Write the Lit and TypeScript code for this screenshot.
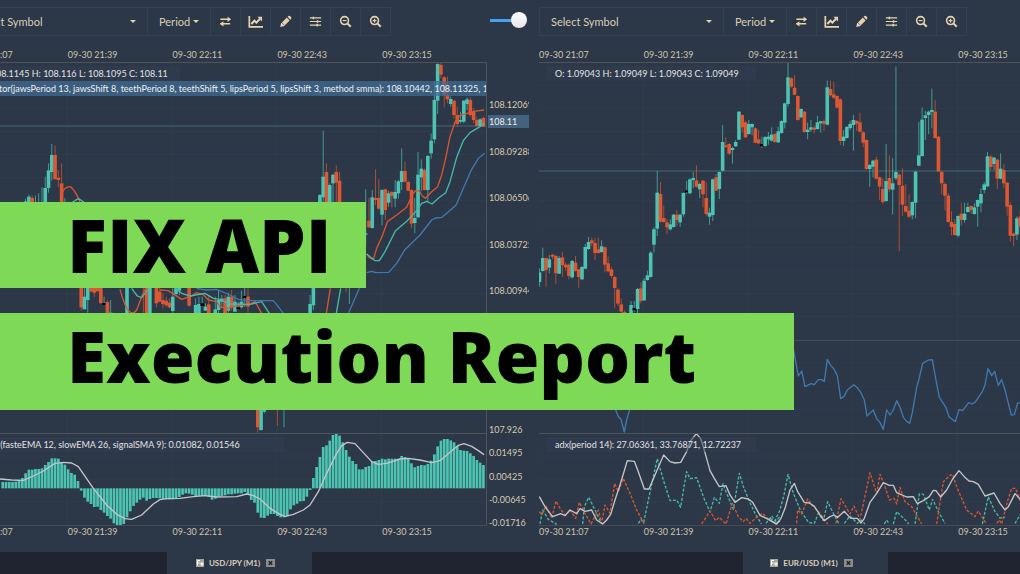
import { LitElement, html, svg, css } from "lit";
import { customElement, property } from "lit/decorators.js";

type Candle = [number, number, number, number, number, string];

// Chart data is kept in ticks: three ticks to a pixel, candle spacing 9.81 ticks.
const STEP = 3.27;

/** Parses "kind,high,top,bottom,low" quotes; consecutive quotes follow `start`, "@n" jumps. */
function quotes(start: number, shift: number, text: string): Candle[] {
  const out: Candle[] = [];
  let i = start;
  for (const part of text.trim().split(/\s+/)) {
    if (part[0] === "@") {
      i = Number(part.slice(1));
      continue;
    }
    const [kind, h, t, b, l] = part.split(",");
    out.push([i, +h + shift, +t + shift, +b + shift, +l + shift, kind]);
    i++;
  }
  return out;
}

const usdjpy: Candle[] = quotes(19, 174, `
u,236,244,260,260 u,224,230,260,260 d,226,234,260,260 u,227,246,260,260 u,220,248,260,260 u,202,246,260,260
u,170,204,260,260 u,130,151,204,218 u,72,105,156,182 d,76,105,177,180 d,150,173,180,202 d,130,190,260,260 u,234,250,260,260
@36 d,495,495,562,572 u,500,530,568,568 u,495,500,540,578 d,495,495,515,515 d,495,500,518,532 d,495,500,514,514 d,495,495,549,552 n,530,549,555,556
d,542,546,590,590 u,540,578,590,590
@50 u,480,495,590,590
@55 d,495,495,500,578 d,495,495,590,590 u,495,495,590,590
@59 d,495,500,550,562 d,495,515,545,545 d,520,540,552,565 d,530,542,556,560 d,535,548,562,565 u,505,530,573,578 u,495,505,522,528 u,495,500,512,525
@69 d,495,500,557,560
@71 u,535,555,590,590 u,530,552,590,590 n,530,550,558,560 u,550,560,572,572 d,525,553,590,590
@77 u,530,568,590,590 u,510,540,570,590 u,525,536,545,565 d,525,535,590,590 u,518,530,572,578 d,510,530,562,572 u,525,545,575,575 n,545,562,568,570
u,512,545,562,565 n,500,528,534,560 d,505,530,560,578
@90 d,860,860,922,938 u,860,860,930,932 u,860,865,875,880
@96 d,860,861,862,918
@98 u,860,861,862,922
@106 u,525,552,590,590 u,490,495,556,570 u,300,320,500,500 u,222,225,260,260 u,32,170,232,260 d,130,156,270,270 u,190,195,260,260 u,162,164,190,260
d,136,156,188,260 d,155,182,270,270
@117 d,495,496,497,515 u,495,496,497,552
@123 u,208,340,341,375 d,234,302,322,324 u,210,232,324,326 d,148,234,240,255 d,178,234,266,270 u,208,210,284,316 d,206,208,270,300
u,212,220,248,260 d,213,216,228,262 u,180,216,236,262 u,180,184,220,236 u,85,153,186,210 d,124,153,185,187 d,182,186,212,213
d,208,210,311,325 u,234,294,309,340 u,96,164,292,295 u,118,146,172,213 d,146,150,210,212 u,105,108,210,243 u,40,62,100,116
u,-115,-60,58,70 u,-170,-168,-58,-18 d,-172,-165,-136,-125 d,-132,-128,-75,-38 d,-130,-75,-62,-50 u,-70,-63,-48,-40 d,-60,-58,-15,-5
d,-40,-15,12,20 u,-25,0,5,10 u,-60,-58,5,10 u,-68,-62,-48,-30 d,-68,-60,-15,-10 d,-35,-27,0,10 d,-8,0,18,20 u,-5,-2,18,20 d,-10,-6,20,22`);

const eurusd: Candle[] = [
  ...quotes(0, 174, `
u,445,457,486,500 u,383,414,453,455 d,412,414,450,500 u,405,418,443,460 d,402,404,410,418 d,405,408,460,493 u,408,414,461,462
d,395,412,435,470 d,428,434,442,452 d,430,434,468,478 u,420,423,472,476 d,408,428,453,455 d,446,448,471,503 u,438,441,478,480
u,372,381,446,448 u,351,366,387,390 d,352,361,370,378 d,354,369,399,420 d,353,388,399,401 u,361,379,396,398 d,380,382,434,457
d,410,430,454,457 d,440,448,468,473 d,468,471,504,565 d,504,509,551,558 d,535,553,575,580 d,572,576,600,610 d,585,590,610,620
u,543,555,600,600 n,543,564,571,575 u,504,507,567,580 d,487,505,543,550 u,474,482,541,543 u,452,466,480,482 u,394,398,471,473
u,322,328,374,397 u,153,218,326,348 d,186,222,305,308 d,256,294,306,308 d,297,307,322,342 u,298,313,328,332 u,282,284,321,323
d,270,284,300,318 u,282,284,307,321 u,217,219,283,290 n,183,211,217,222 u,176,178,220,222 u,156,174,180,205 d,136,181,200,203
u,188,192,208,234 d,180,182,223,262 d,187,234,282,287 u,263,278,290,314 u,176,178,285,303 d,162,172,212,213 u,155,156,207,237
u,15,66,152,155 d,51,76,81,84 d,70,72,101,105 u,80,84,90,131 u,60,66,79,81 u,-27,-25,59,60 d,-17,-15,22,38 d,2,7,52,54
u,0,12,42,44 u,10,12,22,46 d,22,25,68,70 d,30,58,70,72 n,50,72,79,84 u,48,51,78,80 u,36,50,58,74 u,22,44,62,64 d,38,42,66,68 u,20,34,67,69`),
  ...quotes(74, -6, `
u,181,183,219,221 u,128,130,188,205 u,5,52,132,140 d,52,55,80,85 d,45,83,104,106 d,106,108,180,182 u,145,147,172,175 d,153,155,216,218
u,188,209,216,238 u,180,202,209,216 d,198,203,209,220 u,168,187,207,209 u,182,184,190,218 d,178,183,191,212 u,62,82,194,196 d,62,87,106,110
d,64,103,113,117 d,106,108,143,145 d,115,118,243,255 u,210,230,243,258 u,198,201,234,236 u,182,192,204,210 u,165,180,195,272 d,180,183,191,213
d,158,187,215,218 d,213,217,248,262 d,238,240,327,330 u,312,315,327,380 u,300,302,320,352 d,290,299,356,358 d,350,352,380,420 d,355,387,426,432
u,252,363,423,425 d,286,354,388,396 u,294,370,389,464 u,20,336,355,360 d,340,344,375,574 d,325,377,434,468 d,372,438,455,458 d,403,452,470,475
u,424,426,466,478 u,332,335,428,475 u,185,286,317,319 u,142,179,288,290 u,152,166,174,240 u,152,155,165,222 u,86,150,156,205 d,120,155,234,236
d,228,230,334,336 d,333,336,370,403 d,367,372,407,452 d,400,407,486,488 d,454,486,501,526 d,477,492,525,527 u,466,468,527,532 d,428,461,480,497
u,428,461,480,488 u,428,441,456,458 d,436,438,450,462 u,430,442,462,464 u,418,420,440,500 u,385,402,430,457 u,366,373,390,400 u,276,289,379,381
d,285,290,321,330 u,290,293,312,330 d,297,299,356,388 u,280,326,356,358 d,312,330,370,384 d,366,368,440,467 d,426,435,527,545 d,518,521,528,558
u,469,475,524,540 d,450,470,500,520`),
];

// Histogram levels; the zero level is 265.
const histogram = `246 246 246 246 245 240 234 220 209 209 207 207 205 195 186 175 175 176 187 194 208 219 224 243 272 293 305 312 321 320 330
338 348 356 370 375 375 372 352 334 318 308 299 293 302 297 294 294 295 297 298 298 298 295 291 284 280 281 284 288 288 288 287 291 299 296 290
288 286 283 283 281 280 280 276 282 300 308 338 353 354 347 342 342 348 352 352 349 328 316 311 304 303 290 270 234 201 171 141 136 122 105 99
107 127 150 170 183 192 208 208 201 198 184 183 180 176 178 176 176 176 176 168 171 175 190 202 198 195 196 192 182 163 139 122 117 117 121 127
138 150 152 153 160 168 180 188 195`.split(/\s+/).map(Number);

const candleMarks = (list: Candle[]) => list.map(([i, h, t, b, l, kind]) => {
  const x = i * STEP + 0.5;
  return svg`<g class=${kind}>
    <line class="wick" x1=${x} x2=${x} y1=${h / 3} y2=${l / 3}></line>
    <rect x=${x - 1.8} y=${t / 3} width="3.6" height=${Math.max(1.4, (b - t) / 3)}></rect></g>`;
});

const gridMarks = (rows: number, gap: number) => svg`
  ${Array.from({ length: rows }, (_, i) => svg`<line class="grid" x1="0" x2="100%" y1=${(i + 1) * gap} y2=${(i + 1) * gap}></line>`)}
  ${[1, 2, 3, 4].map((i) => svg`<line class="grid" x1=${i * 20 + "%"} x2=${i * 20 + "%"} y1="0" y2="100%"></line>`)}`;

const usdjpyPrice = svg`
  ${gridMarks(15, 23.15)}
  <line class="level" x1="0" x2="100%" y1="64" y2="64"></line>
  ${candleMarks(usdjpy)}
  <g transform="translate(37 58) scale(.33333)">
    <path class="lips" d="M186 224Q190 200 212 200Q228 215 240 246M360 508Q375 565 390 576Q400 584 410 570L425 530L440 500M480 510L505 512L545 538L575 528L590 518L610 524L625 540L650 545L660 560L680 566L700 560L750 552L765 545L785 580"></path>
    <path class="teeth" d="M218 246L235 236L252 246M395 505L412 528L425 533L445 508M520 500L545 520L570 528L615 520L640 535L660 538L690 552L750 553L785 545L808 580"></path>
    <path class="jaws" d="M590 506L620 510L650 508L690 525L715 538L740 542L820 542Q835 560 850 580"></path>
  </g>
  <g transform="translate(287 58) scale(.33333)">
    <path class="lips" d="M229 580L241 505M350 402L358 413L370 418L380 385L398 345L412 305L440 285L470 262L488 222L497 212L508 213L517 228L526 235L545 215L563 200L575 165L588 110L600 50L612 15Q620 -12 640 -17L672 -26L702 -30"></path>
    <path class="teeth" d="M259 580L272 505M350 402L375 422L388 422L405 395L436 333L470 304L500 272L515 250L530 244L546 252L565 235L587 218L600 185L620 112L640 62L660 38L690 20L704 10"></path>
    <path class="jaws" d="M296 578L328 505M350 458L366 454L376 458L416 457L440 430L464 390L510 345L545 300L556 294L576 292L618 256L640 205L665 148L685 115L704 100"></path>
  </g>`;

const usdjpyMacd = svg`
  ${gridMarks(3, 23)}
  ${histogram.map((v, k) => {
    const x = (k + 12) * STEP + 0.5;
    const y = (v - 99) / 3;
    const zero = 166 / 3;
    return svg`<rect class="bar" x=${x - 1.35} width="2.7" y=${Math.min(y, zero)} height=${Math.max(0.6, Math.abs(zero - y))}></rect>`;
  })}
  <g transform="translate(37 -33) scale(.33333)">
    <path class="signal" d="M0 237L35 240L70 241L100 228L130 213L165 190L190 187L215 189L235 200L280 265L320 315L350 343L375 356L395 358L425 345L460 312L480 299L500 296L540 295L580 290L615 287L650 291L710 290L740 282L760 287L780 297L810 325L840 343L855 349L880 343L910 330L930 315L955 275L980 220L1010 160L1025 137L1042 127L1065 131L1090 158L1115 185L1135 193L1160 190L1200 177L1225 175L1260 180L1295 188L1320 182L1350 157L1375 136L1392 131L1415 139L1435 152L1452 164"></path>
  </g>`;

const eurusdPrice = svg`
  ${gridMarks(15, 23.15)}
  <line class="level" x1="0" x2="100%" y1="109" y2="109"></line>
  <line class="axis" x1="0" x2="100%" y1="278.5" y2="278.5"></line>
  ${candleMarks(eurusd)}
  <g transform="translate(-9 248) scale(.33333)">
    <path class="jaws" d="M250 285L258 302L265 320L273 328L283 366L290 330L298 302L305 280"></path>
  </g>
  <g transform="translate(231 248) scale(.33333)">
    <path class="jaws" d="M66 95L72 127L85 198L95 183L105 230L123 221L133 224L145 209L155 209L163 214L172 148L182 166L192 177L202 197L212 266L222 259L232 240L251 224L262 233L272 247L283 270L291 318L310 300L320 326L330 338L340 358L350 300L360 315L370 300L380 272L390 292L400 322L410 334L419 340L427 308L440 232L447 207L458 160L475 150L487 149L497 205L508 262L520 280L528 293L537 320L556 335L567 299L578 302L596 278L605 282L615 277L625 263L637 245L645 225L654 176L665 197L674 184L685 226L695 209L706 243L715 280L724 315L733 314L743 279L760 280"></path>
  </g>`;

const eurusdAdx = svg`
  ${gridMarks(3, 23)}
  <g transform="translate(-9 -123) scale(.33333)">
    <path class="plus" d="M30 642L38 600L55 628L80 643M158 642L163 590L176 562L195 600L215 642M325 640L333 628L341 638L355 570L370 500L382 446L400 510L420 572L440 570L452 592L462 530L470 485L480 506L500 503L520 560L540 606L553 562L568 580L579 521L590 550L610 598L628 490L640 530L660 578L675 610L694 642M708 640L725 618L737 634L750 620"></path>
    <path class="minus" d="M28 605L35 615L48 588L65 625L78 573L90 595L107 617L120 600L137 625L148 577L165 610L183 642L205 600L215 640L225 585L240 610L254 520L265 545L280 505L300 550L320 600L343 642M515 642L540 603L557 632L568 622L588 642L607 580L625 620L640 635L648 625L660 640L680 622L697 610L718 630"></path>
    <path class="signal" d="M28 560L45 590L68 620L92 611L105 617L120 600L140 611L150 596L165 604L185 600L200 630L218 642L230 630L242 613L255 570L270 525L292 452L313 454L325 485L343 537L357 537L375 495L401 435L420 455L435 459L452 457L470 425L480 395L499 371L512 386L520 410L540 482L553 505L568 530L588 527L600 555L615 577L635 563L655 567L668 577L690 616L715 628L738 642L750 632"></path>
  </g>
  <g transform="translate(231 -123) scale(.33333)">
    <path class="plus" d="M0 625L15 632L30 600L42 555L54 493L70 550L90 598L115 637L133 640L145 610L160 632L173 575L190 610L206 640M223 640L240 618L262 640L273 630L285 642M343 642L350 630L358 642M370 642L380 605L408 632L416 642M435 642L448 552L460 553L478 600L488 568L505 605L525 640M637 642L655 560L675 605L690 624L705 622M735 640L750 615"></path>
    <path class="minus" d="M80 640L83 600L95 612L113 567L130 590L150 610L173 642M198 640L213 566L240 612L252 588L270 628L300 488L320 550L330 493L345 530L358 570L372 565L380 582L390 532L405 575L425 590L455 642M500 642L508 590L520 515L540 496L548 493L560 530L590 600L605 612L615 620L625 603L648 640M680 640L688 630L695 642L712 575L725 535L737 535L750 572"></path>
    <path class="signal" d="M0 630L20 642L33 625L45 595L60 540L73 520L83 545L103 577L118 579L133 589L150 615L163 632L180 620L192 615L203 622L223 604L242 625L262 625L273 639L283 625L300 577L320 550L340 518L358 526L370 526L380 548L410 561L430 560L442 581L460 572L478 560L490 541L498 542L512 561L530 540L548 507L567 482L583 500L597 513L610 515L625 523L645 558L672 549L690 580L705 600L715 590L735 551L750 567"></path>
  </g>`;

const icons = [
  ["Compare", svg`<path d="M2.5 5.6H11M2.5 10.4H13" stroke="currentColor"></path><path class="solid" d="M10.2 2.8L14 5.6L10.2 8.4ZM5.8 7.6L2 10.4L5.8 13.2Z"></path>`],
  ["Indicators", svg`<path class="solid" d="M.5 2H2.3V12.8H16V14.6H.5Z"></path><path d="M3.6 10.6L6.8 7.2L9 9.2L12.6 5.4" class="thick"></path><path class="solid" d="M10 3H15V8Z"></path>`],
  ["Draw", svg`<path class="solid" d="M2.4 13.8L3.2 10L9.4 3.8L12.4 6.8L6.2 13ZM10.2 3L11.2 2.1Q12 1.5 12.8 2.2L14 3.4Q14.7 4.2 14 5L13.2 6Z"></path><path d="M4.6 9.8L6.3 11.5" class="cut"></path>`],
  ["Settings", svg`<path d="M2 4.2H14M2 8H14M2 11.8H14" class="rule"></path><path class="solid" d="M5 2.8H6.6V5.6H5ZM9.4 6.6H11V9.4H9.4ZM9 10.4H10.6V13.2H9Z"></path>`],
  ["Zoom out", svg`<circle cx="7" cy="7" r="4.2"></circle><path d="M10 10L13.6 13.6" class="thick"></path><path class="solid" d="M5 6.4H9V7.6H5Z"></path>`],
  ["Zoom in", svg`<circle cx="7" cy="7" r="4.2"></circle><path d="M10 10L13.6 13.6" class="thick"></path><path class="solid" d="M5 6.4H9V7.6H5ZM6.4 5H7.6V9H6.4Z"></path>`],
] as const;

const times = ["09-30 21:07", "09-30 21:39", "09-30 22:11", "09-30 22:43", "09-30 23:15"];

@customElement("chart-pane")
class ChartPane extends LitElement {
  @property() pair = "";
  @property() ohlc = "";
  @property() overlay = "";
  @property() indicator = "";
  @property() current = "";
  @property({ type: Boolean }) toggle = false;
  @property({ attribute: false }) prices: string[] = [];
  @property({ attribute: false }) levels: string[] = [];
  @property({ attribute: false }) priceArt: unknown;
  @property({ attribute: false }) indicatorArt: unknown;

  static styles = css`
    :host { display: flex; flex-direction: column; min-width: 0; padding-top: 7px; box-sizing: border-box; }
    .toolbar { display: flex; align-items: center; }
    .tools { display: grid; grid-template-columns: 184px 63px repeat(6, 30px); border: 1px solid #334154; border-right: 0; height: 29px; box-sizing: border-box; }
    .tools > * { border-right: 1px solid #334154; min-width: 0; }
    .pick { display: flex; align-items: center; position: relative; }
    select { appearance: none; width: 100%; height: 27px; padding: 0 0 0 11px; margin: 0; border: 0; outline: 0; background: none; color: #d9cdb6; font: 11px Lato, sans-serif; }
    .caret { position: absolute; right: 11px; width: 6px; height: 3px; fill: #e2d0ae; pointer-events: none; }
    .tool { appearance: none; border-width: 0 1px 0 0; border-style: solid; border-color: #334154; background: none; margin: 0; padding: 0; display: grid; place-items: center; color: #e6d3af; }
    .tool svg { width: 15px; height: 15px; }
    .tool path { fill: none; stroke: currentColor; stroke-width: 1.5; }
    .tool .solid { fill: currentColor; stroke: none; }
    .tool .thick { stroke-width: 2.2; }
    .tool .rule { stroke-width: 1.3; }
    .tool .cut { stroke: #2c3848; stroke-width: 0.8; }
    .tool circle { fill: none; stroke: currentColor; stroke-width: 1.7; }
    .toggle { appearance: none; display: flex; justify-content: flex-end; width: 37px; height: 16px; margin: 0 2px 4px auto; background: linear-gradient(#46a1f2, #46a1f2) 0 7px / 24px 3px no-repeat; }
    .toggle::before { content: ""; width: 16px; height: 16px; border-radius: 50%; background: linear-gradient(#fff, #e6e6e6); }
    .times { display: grid; grid-template-columns: repeat(5, 20%); margin-right: 42px; font-size: 9px; line-height: 12px; color: #cfc3ae; white-space: nowrap; }
    .times.top { margin-top: 13px; margin-bottom: 1px; }
    .row { display: grid; grid-template-columns: minmax(0, 1fr) 42px; }
    .plot { position: relative; overflow: hidden; border-top: 1px solid #4e5259; border-right: 1px solid #4e5259; }
    .plot > svg { display: block; width: 100%; margin-top: -1px; }
    .price .plot > svg { height: 371px; }
    .study .plot > svg { height: 92px; }
    .study .plot { border-bottom: 1px solid #454c56; }
    .legend { position: absolute; top: 3px; left: 8px; display: grid; max-width: 100%; justify-items: start; }
    .tag { min-width: 193px; padding: 0 8px; font-size: 9px; line-height: 15px; white-space: nowrap; color: #e2e2e2; background: rgba(50, 62, 82, 0.5); }
    .tag.wide { min-width: 297px; }
    .tag.active { background: rgba(65, 108, 147, 0.72); color: #eef1f4; }
    .scale { position: relative; display: grid; grid-auto-rows: 1fr; align-items: end; overflow: hidden; font-size: 9px; line-height: 6px; color: #d8cab0; padding-left: 2px; }
    .current { position: absolute; top: 53px; left: 1px; right: 0; padding-left: 1px; line-height: 12px; padding-top: 1px; background: #42627f; color: #f2eee6; }
    .grid { stroke: #303d4d; stroke-width: 1; }
    .axis { stroke: #414c57; stroke-width: 1; }
    .level { stroke: #3d5769; stroke-width: 1.5; }
    .u { fill: #4cc3b3; stroke: #4cc3b3; }
    .d { fill: #dd5732; stroke: #dd5732; }
    .n { fill: #05070a; stroke: #4cc3b3; }
    .u rect, .d rect, .n rect { stroke: none; }
    .wick { stroke-width: 1; opacity: 0.7; }
    .bar { fill: #4cc3b3; }
    .plot path { fill: none; stroke-width: 4; stroke-linejoin: round; }
    .lips, .minus { stroke: #d9552f; }
    .teeth, .plus { stroke: #47b9a8; }
    .jaws { stroke: #4179ae; }
    .plus, .minus { stroke-dasharray: 9 5; }
    .signal { stroke: #c3c6c9; }
    .tabs { display: flex; margin-top: auto; height: 22px; background: #1f2430; }
    .tab { appearance: none; border: 0; margin: 0 0 0 204px; width: 145px; padding: 0 8px 0 0; display: flex; align-items: center; justify-content: center; gap: 4px; background: #2c3848; color: #dccfb8; font: bold 8px Lato, sans-serif; white-space: nowrap; }
    .tab svg { width: 9px; height: 8px; }
    .tab .letter { fill: none; stroke: #fff; stroke-width: 1; }
    .tab .cross { fill: none; stroke: #20262f; stroke-width: 1.6; }
    .tab .close { margin-left: 2px; }
  `;

  render() {
    return html`
      <div class="toolbar">
        <div class="tools">
          <div class="pick"><select aria-label="Symbol"><option>Select Symbol</option></select><svg class="caret" viewBox="0 0 6 3"><polygon points="0,0 6,0 3,3"></polygon></svg></div>
          <div class="pick"><select aria-label="Period"><option>Period</option></select><svg class="caret" viewBox="0 0 6 3"><polygon points="0,0 6,0 3,3"></polygon></svg></div>
          ${icons.map(([name, art]) => html`<button class="tool" aria-label=${name}><svg viewBox="0 0 16 16">${art}</svg></button>`)}
        </div>
        ${this.toggle ? html`<input class="toggle" type="checkbox" aria-label="Live" checked />` : ""}
      </div>
      <div class="times top">${times.map((t) => html`<span>${t}</span>`)}</div>
      <div class="row price">
        <div class="plot">
          <svg>${this.priceArt}</svg>
          <div class="legend">
            <span class="tag">${this.ohlc}</span>
            ${this.overlay ? html`<span class="tag active">${this.overlay}</span>` : ""}
          </div>
        </div>
        <div class="scale">
          ${this.prices.map((p) => html`<span>${p}</span>`)}
          ${this.current ? html`<span class="current">${this.current}</span>` : ""}
        </div>
      </div>
      <div class="row study">
        <div class="plot">
          <svg>${this.indicatorArt}</svg>
          <div class="legend"><span class="tag ${this.overlay ? "wide" : ""}">${this.indicator}</span></div>
        </div>
        <div class="scale">${this.levels.map((p) => html`<span>${p}</span>`)}</div>
      </div>
      <div class="times">${times.map((t) => html`<span>${t}</span>`)}</div>
      <div class="tabs">
        <button class="tab">
          <svg viewBox="0 0 9 8"><rect width="8" height="8" fill="#a9a59c"></rect><path class="letter" d="M1.5 6.5V1.5H4M1.5 4H3.5"></path><rect x="4.5" y="3.5" width="3" height="3" fill="#f4f0e8"></rect></svg>
          ${this.pair} (M1)
          <svg class="close" viewBox="0 0 9 8"><rect width="9" height="8" fill="#8b8b87"></rect><path class="cross" d="M2.8 2.2L6.2 5.8M6.2 2.2L2.8 5.8"></path></svg>
        </button>
      </div>`;
  }
}

@customElement("app-root")
class AppRoot extends LitElement {
  static styles = css`
    :host { display: block; position: relative; overflow: hidden; min-height: 100vh; background: #2c3848; font-family: Lato, sans-serif; }
    .desk { display: grid; grid-template-columns: calc(50% + 5px) calc(50% - 5px); margin: 0 -85px 0 -37px; min-height: 100vh; }
    .first, .second { display: grid; }
    .first { padding-right: 10px; background: linear-gradient(#1f2430, #1f2430) bottom / 100% 22px no-repeat; }
    .title { position: absolute; top: 202px; left: 0; margin: 0; display: grid; justify-items: start; gap: 25px; font: 800 74px "Open Sans", sans-serif; color: #000; white-space: nowrap; }
    .title span { background: #7ed957; padding-left: 67px; }
    .title .lead { line-height: 86px; padding-right: 34px; }
    .title .main { font-size: 71px; line-height: 85px; padding-right: 98px; padding-bottom: 12px; }
  `;

  render() {
    return html`
      <main class="desk">
        <div class="first">
          <chart-pane toggle pair="USD/JPY" current="108.11"
            ohlc="O: 108.1145 H: 108.116 L: 108.1095 C: 108.11"
            overlay="alligator(jawsPeriod 13, jawsShift 8, teethPeriod 8, teethShift 5, lipsPeriod 5, lipsShift 3, method smma): 108.10442, 108.11325, 108.12069"
            indicator="macd(fasteEMA 12, slowEMA 26, signalSMA 9): 0.01082, 0.01546"
            .prices=${["108.12069", "108.09288", "108.06506", "108.03725", "108.00944", "", "", "107.926"]}
            .levels=${["0.01495", "0.00425", "-0.00645", "-0.01716"]}
            .priceArt=${usdjpyPrice} .indicatorArt=${usdjpyMacd}></chart-pane>
        </div>
        <div class="second">
          <chart-pane pair="EUR/USD"
            ohlc="O: 1.09043 H: 1.09049 L: 1.09043 C: 1.09049"
            indicator="adx(period 14): 27.06361, 33.76871, 12.72237"
            .priceArt=${eurusdPrice} .indicatorArt=${eurusdAdx}></chart-pane>
        </div>
      </main>
      <h1 class="title"><span class="lead">FIX API</span><span class="main">Execution Report</span></h1>`;
  }
}
